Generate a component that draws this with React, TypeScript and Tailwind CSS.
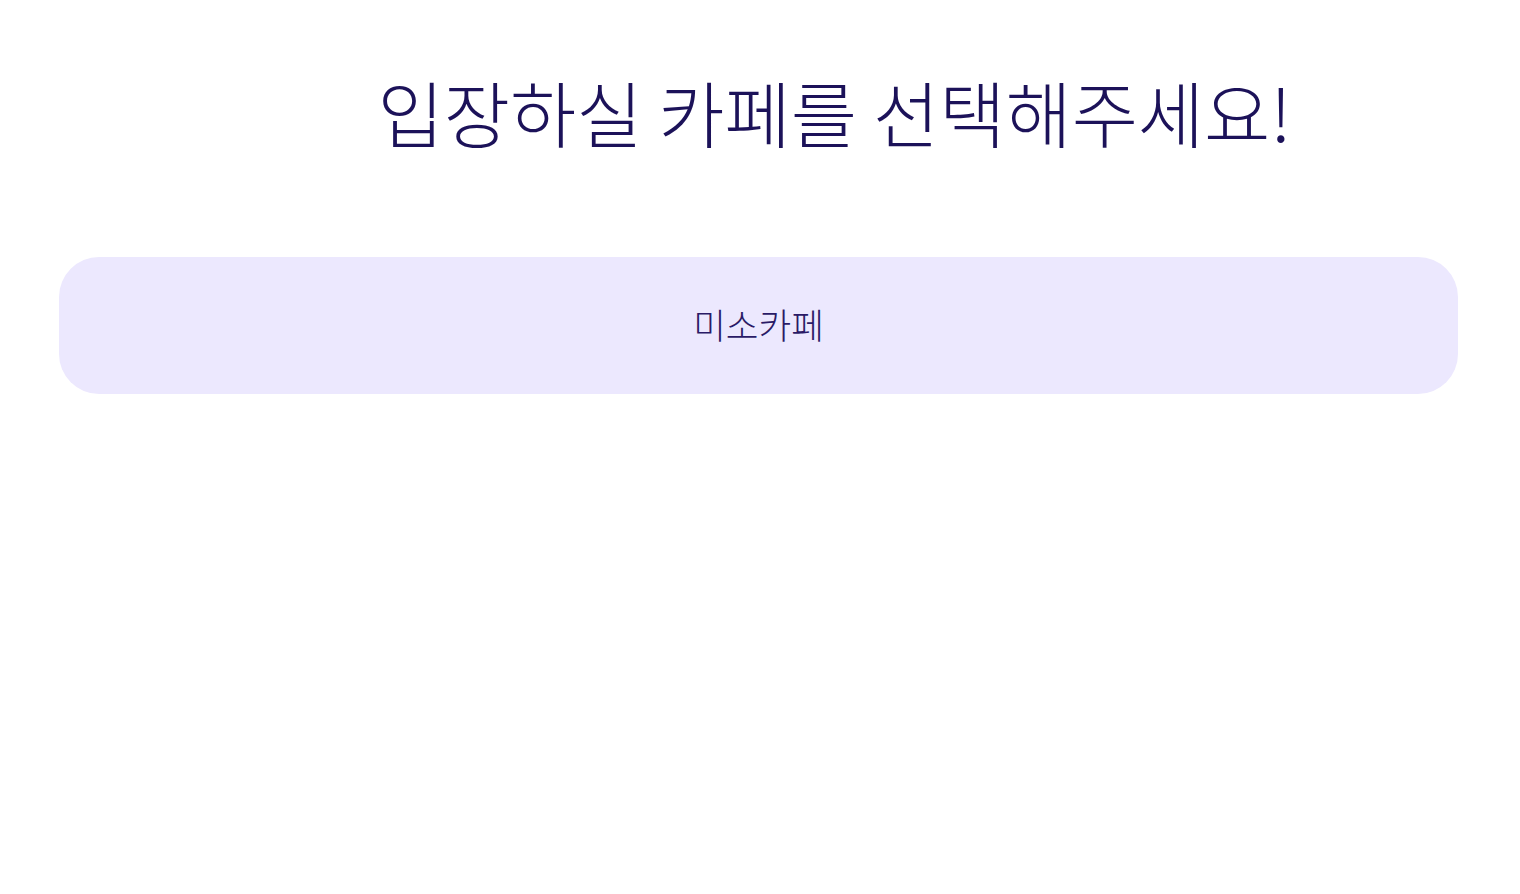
export default function App() {
  return (
    <div className="min-h-screen bg-white pl-[59px] pr-[62px]" style={{ fontFamily: '"Noto Sans CJK KR", "Noto Sans", sans-serif' }}>
      <h1 className="pt-[56px] pl-[152px] text-center text-[72px] font-light leading-[110px] text-[#1c1259]">
        입장하실 카페를 선택해주세요!
      </h1>
      <div className="mt-[91px] flex h-[137px] items-center justify-center rounded-[40px] bg-[#ece8fe]">
        <span className="-mt-[3px] text-[35.5px] font-light text-[#2a1a66]">미소카페</span>
      </div>
    </div>
  );
}
